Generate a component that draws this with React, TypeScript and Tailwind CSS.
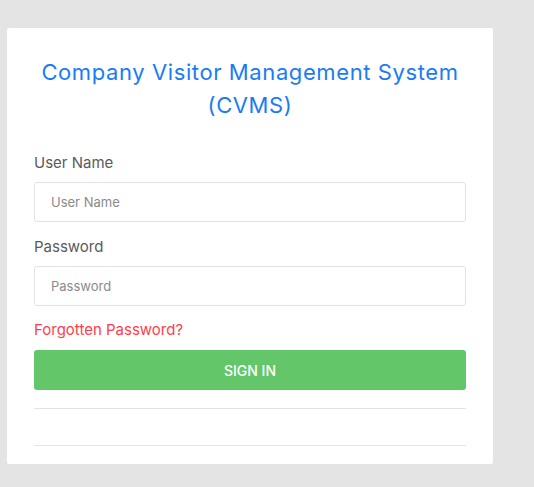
const App = () => {
  return (
    <div className="min-h-[487px] bg-[#e4e4e4] pt-[28px] pl-[7px] font-['Inter',sans-serif]">
      <div className="w-[486px] h-[436px] bg-white rounded-[2px] px-[27px] pt-[28px]">
        <h1 className="text-center text-[22px] tracking-[0.6px] leading-[33px] text-[#1a7cf4] font-normal">
          Company Visitor Management System (CVMS)
        </h1>

        <form className="mt-[31px]" onSubmit={(e) => e.preventDefault()}>
          <label className="block text-[15px] leading-[20px] text-[#5a5a5a]">User Name</label>
          <input
            type="text"
            placeholder="User Name"
            className="mt-[9px] block w-full h-[40px] rounded-[3px] border border-[#e2e2e2] px-[16px] text-[13px] placeholder:text-[#8a8a8a] outline-none"
          />

          <label className="block mt-[15px] text-[15px] leading-[20px] text-[#5a5a5a]">Password</label>
          <input
            type="password"
            placeholder="Password"
            className="mt-[9px] block w-full h-[40px] rounded-[3px] border border-[#e2e2e2] px-[16px] text-[13px] placeholder:text-[#8a8a8a] outline-none"
          />

          <a href="#" className="block mt-[14px] text-[15px] leading-[20px] text-[#ff3d4d]">
            Forgotten Password?
          </a>

          <button
            type="submit"
            className="mt-[10px] w-full h-[40px] rounded-[3px] bg-[#63c76a] text-white text-[14px] font-medium"
          >
            SIGN IN
          </button>

          <hr className="mt-[18px] border-[#e4e4e4]" />
          <hr className="mt-[36px] border-[#e4e4e4]" />
        </form>
      </div>
    </div>
  );
};

export default App;
